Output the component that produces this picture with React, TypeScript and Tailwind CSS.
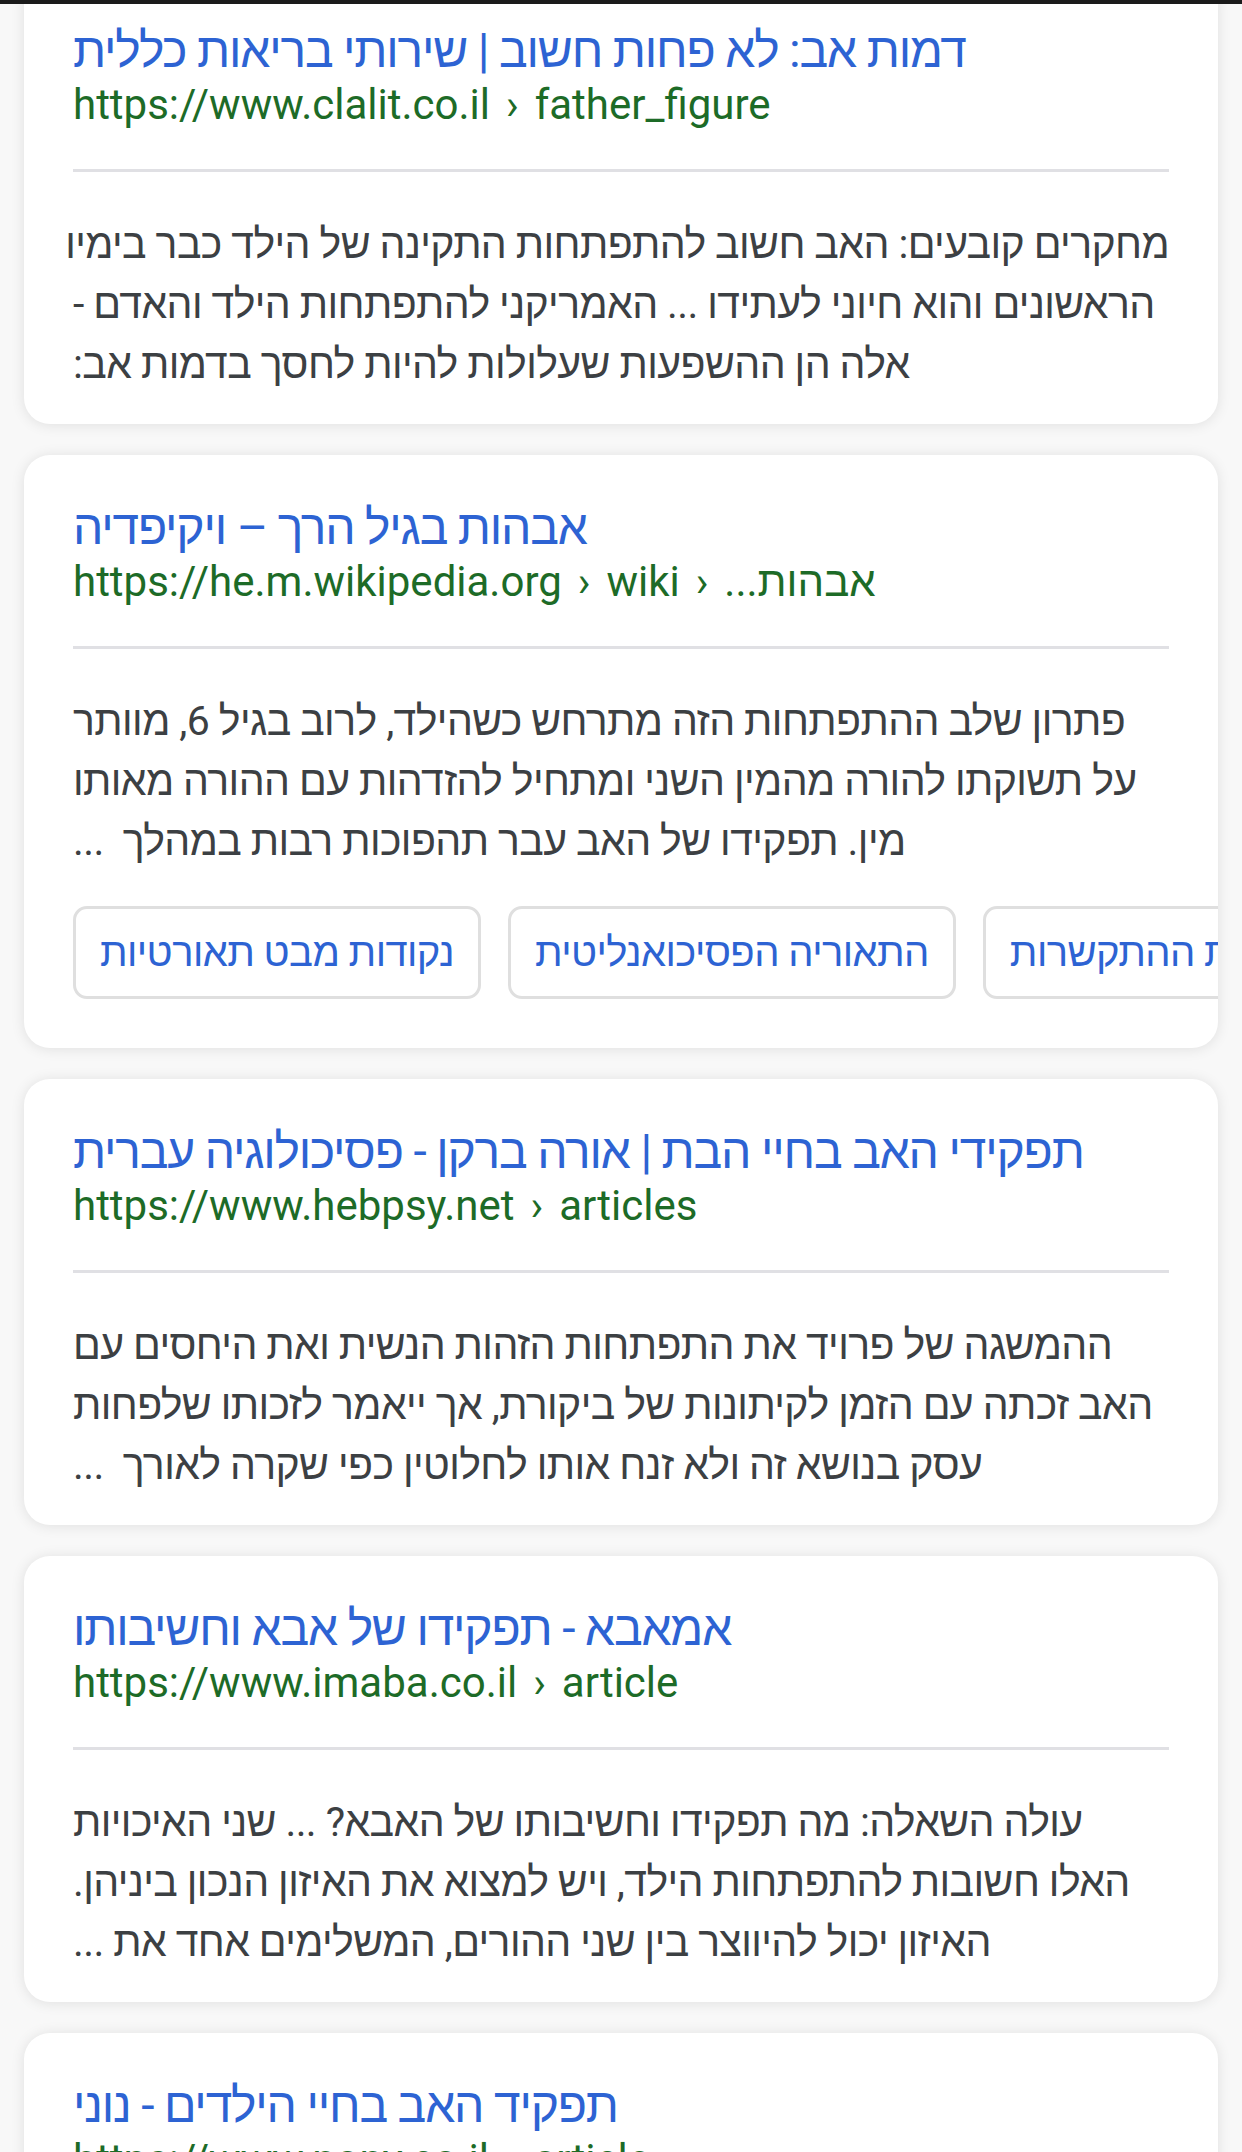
import React from "react";

type Result = {
  title: string;
  url: React.ReactNode;
  lines?: string[];
  chips?: string[];
};

const Sep = () => <span className="mx-[16px]">›</span>;

const results: Result[] = [
  {
    title: "דמות אב: לא פחות חשוב | שירותי בריאות כללית",
    url: (
      <>
        https://www.clalit.co.il<Sep />father_figure
      </>
    ),
    lines: [
      "מחקרים קובעים: האב חשוב להתפתחות התקינה של הילד כבר בימיו",
      "הראשונים והוא חיוני לעתידו ... האמריקני להתפתחות הילד והאדם -",
      "אלה הן ההשפעות שעלולות להיות לחסך בדמות אב:",
    ],
  },
  {
    title: "אבהות בגיל הרך – ויקיפדיה",
    url: (
      <>
        https://he.m.wikipedia.org<Sep />wiki<Sep />
        <span dir="rtl">אבהות...</span>
      </>
    ),
    lines: [
      "פתרון שלב ההתפתחות הזה מתרחש כשהילד, לרוב בגיל 6, מוותר",
      "על תשוקתו להורה מהמין השני ומתחיל להזדהות עם ההורה מאותו",
      "מין. תפקידו של האב עבר תהפוכות רבות במהלך \u00a0...",
    ],
    chips: ["נקודות מבט תאורטיות", "התאוריה הפסיכואנליטית", "תיאוריית ההתקשרות"],
  },
  {
    title: "תפקידי האב בחיי הבת | אורה ברקן - פסיכולוגיה עברית",
    url: (
      <>
        https://www.hebpsy.net<Sep />articles
      </>
    ),
    lines: [
      "ההמשגה של פרויד את התפתחות הזהות הנשית ואת היחסים עם",
      "האב זכתה עם הזמן לקיתונות של ביקורת, אך ייאמר לזכותו שלפחות",
      "עסק בנושא זה ולא זנח אותו לחלוטין כפי שקרה לאורך \u00a0...",
    ],
  },
  {
    title: "אמאבא - תפקידו של אבא וחשיבותו",
    url: (
      <>
        https://www.imaba.co.il<Sep />article
      </>
    ),
    lines: [
      "עולה השאלה: מה תפקידו וחשיבותו של האבא? ... שני האיכויות",
      "האלו חשובות להתפתחות הילד, ויש למצוא את האיזון הנכון ביניהן.",
      "האיזון יכול להיווצר בין שני ההורים, המשלימים אחד את ...",
    ],
  },
  {
    title: "תפקיד האב בחיי הילדים - נוני",
    url: (
      <>
        https://www.nony.co.il<Sep />article
      </>
    ),
  },
];

function Card({ r }: { r: Result }) {
  return (
    <div className="mx-[24px] rounded-[26px] bg-white px-[49px] pt-[45px] pb-[30px] shadow-[0_1px_14px_rgba(0,0,0,0.10)]">
      <div
        dir="rtl"
        className="text-left text-[48px] leading-[56px] tracking-[-1.2px] whitespace-nowrap text-[#2d63d3]"
      >
        {r.title}
      </div>
      <div dir="ltr" className="mt-[1px] text-[42px] leading-[50px] whitespace-nowrap text-[#1d6b27]">
        {r.url}
      </div>
      <div className="mt-[39px] h-[3px] bg-[#e0e0e4]" />
      {r.lines && (
        <div className="mt-[42px] text-[41px] leading-[60px] tracking-[-0.6px] text-[#3c4043]">
          {r.lines.map((l, i) => (
            <div key={i} dir="rtl" className="text-left whitespace-nowrap">
              {l}
            </div>
          ))}
        </div>
      )}
      {r.chips && (
        <div className="-mr-[49px] overflow-hidden pt-[35px] pb-[19px]">
          <div className="flex gap-[27px]">
            {r.chips.map((c, i) => (
              <div
                key={i}
                dir="rtl"
                className="flex h-[93px] shrink-0 items-center rounded-[14px] border-[3px] border-[#dfdfdf] px-[24px] text-[40px] tracking-[-0.6px] whitespace-nowrap text-[#2d63d3]"
              >
                {c}
              </div>
            ))}
          </div>
        </div>
      )}
    </div>
  );
}

export default function App() {
  return (
    <div className="relative h-[2152px] w-[1242px] overflow-hidden bg-[#f8f8f8] font-[Roboto,'Liberation_Sans',sans-serif]">
      <div className="mt-[-22px] flex flex-col gap-[31px]">
        {results.map((r, i) => (
          <Card key={i} r={r} />
        ))}
      </div>
      <div className="absolute top-0 left-0 h-[4px] w-full bg-[#1b1b1b]" />
    </div>
  );
}
